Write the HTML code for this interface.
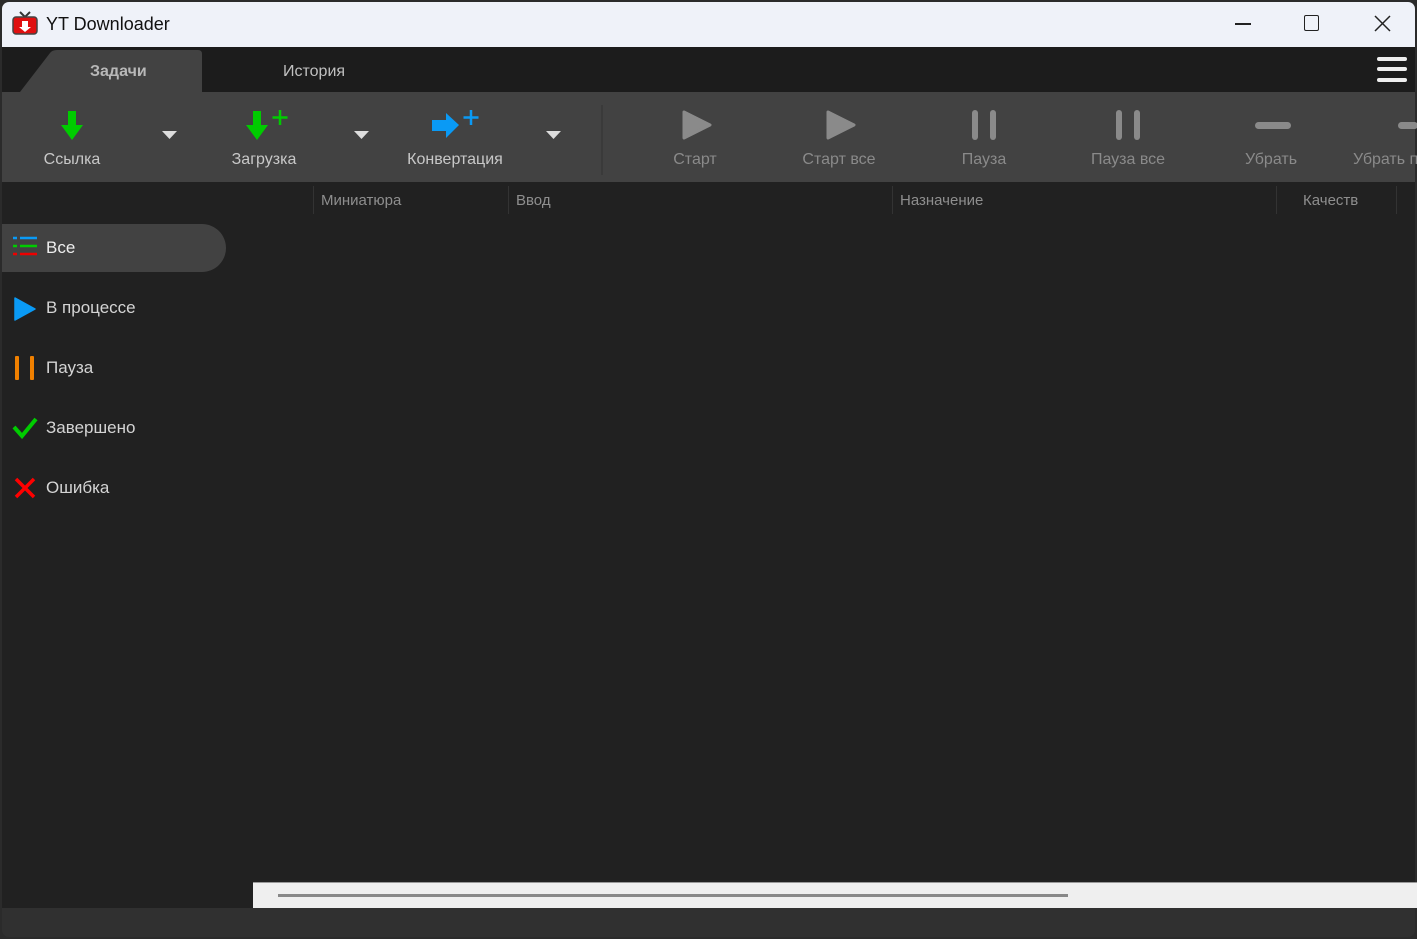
<!DOCTYPE html><html><head><meta charset="utf-8"><style>
*{margin:0;padding:0;box-sizing:border-box}
body{width:1417px;height:939px;background:#2b2b2b;font-family:"Liberation Sans","DejaVu Sans",sans-serif;position:relative;overflow:hidden}
.a{position:absolute}
.tb{left:2px;top:2px;width:1413px;height:45px;background:#eff2f9;border-radius:7px 7px 0 0}
.tl{font-size:18px;color:#111;left:46px;top:14px}
.lbl{font-size:16px;color:#c8c8c8;text-align:center;width:140px}
.dim{color:#8a8a8a}
.hdr{font-size:15px;color:#8e8e8e;top:192px}
.sep{width:1px;height:28px;background:#333;top:186px}
.side{font-size:17px;color:#d4d4d4;left:46px}
</style></head><body>
<div class="a tb"></div>
<svg class="a" style="left:12px;top:10px" width="26" height="26"><path d="M8 2 13 7 18 2" stroke="#333" stroke-width="2" fill="none"/><rect x="1" y="7" width="24" height="17" rx="3" fill="#e01010"/><rect x="1" y="7" width="24" height="17" rx="3" fill="none" stroke="#444" stroke-width="1.5"/><path d="M10 11h6v6h3l-6 5-6-5h3z" fill="#fff"/></svg>
<div class="a tl">YT Downloader</div>
<div class="a" style="left:1235px;top:23px;width:16px;height:1.5px;background:#222"></div>
<div class="a" style="left:1304px;top:15px;width:15px;height:16px;border:1.5px solid #222;border-radius:2px"></div>
<svg class="a" style="left:1374px;top:15px" width="17" height="17"><path d="M1 1 16 16M16 1 1 16" stroke="#222" stroke-width="1.5"/></svg>
<div class="a" style="left:2px;top:47px;width:1413px;height:45px;background:#1c1c1c"></div>
<svg class="a" style="left:2px;top:50px" width="202" height="42"><path d="M0 42 L18 42 L48 3 Q50 0 55 0 L196 0 Q200 0 200 4 L200 42 Z" fill="#424242"/></svg>
<div class="a" style="left:90px;top:63px;font-size:16px;font-weight:bold;color:#b8b8b8">Задачи</div>
<div class="a" style="left:283px;top:63px;font-size:16px;color:#c0c0c0">История</div>
<div class="a" style="left:1377px;top:57px;width:30px;height:4px;background:#eee;border-radius:2px"></div>
<div class="a" style="left:1377px;top:67px;width:30px;height:4px;background:#eee;border-radius:2px"></div>
<div class="a" style="left:1377px;top:78px;width:30px;height:4px;background:#eee;border-radius:2px"></div>
<div class="a" style="left:2px;top:92px;width:1413px;height:90px;background:#424242"></div>
<div class="a" style="left:601px;top:105px;width:2px;height:70px;background:#3a3a3a"></div>
<svg class="a" style="left:50px;top:110px" width="45" height="32"><path d="M18 1h8v14h7L22 30 11 15h7z" fill="#0c0"/></svg>
<svg class="a" style="left:242px;top:110px" width="50" height="32"><path d="M11 1h8v14h7L15 30 4 15h7z" fill="#0c0"/><path d="M38 0v15M30.5 7.5h15" stroke="#0c0" stroke-width="2.5"/></svg>
<svg class="a" style="left:430px;top:110px" width="55" height="32"><path d="M2 10h14V3l13 12-13 13v-7H2z" fill="#0a9af5"/><path d="M41 0v15M33.5 7.5h15" stroke="#0a9af5" stroke-width="2.5"/></svg>
<svg class="a" style="left:162px;top:131px" width="16" height="9"><path d="M0 0h15L7.5 8z" fill="#ddd"/></svg>
<svg class="a" style="left:354px;top:131px" width="16" height="9"><path d="M0 0h15L7.5 8z" fill="#ddd"/></svg>
<svg class="a" style="left:546px;top:131px" width="16" height="9"><path d="M0 0h15L7.5 8z" fill="#ddd"/></svg>
<div class="a lbl" style="left:2px;top:151px">Ссылка</div>
<div class="a lbl" style="left:194px;top:151px">Загрузка</div>
<div class="a lbl" style="left:385px;top:151px">Конвертация</div>
<svg class="a" style="left:682px;top:110px" width="30" height="30"><path d="M2 2 28 15 2 28z" fill="#8a8a8a" stroke="#8a8a8a" stroke-width="3" stroke-linejoin="round"/></svg>
<svg class="a" style="left:826px;top:110px" width="30" height="30"><path d="M2 2 28 15 2 28z" fill="#8a8a8a" stroke="#8a8a8a" stroke-width="3" stroke-linejoin="round"/></svg>
<div class="a" style="left:972px;top:110px;width:6px;height:30px;background:#8a8a8a;border-radius:3px"></div>
<div class="a" style="left:990px;top:110px;width:6px;height:30px;background:#8a8a8a;border-radius:3px"></div>
<div class="a" style="left:1116px;top:110px;width:6px;height:30px;background:#8a8a8a;border-radius:3px"></div>
<div class="a" style="left:1134px;top:110px;width:6px;height:30px;background:#8a8a8a;border-radius:3px"></div>
<div class="a" style="left:1255px;top:122px;width:36px;height:7px;background:#8a8a8a;border-radius:4px"></div>
<div class="a" style="left:1398px;top:122px;width:20px;height:7px;background:#8a8a8a;border-radius:4px"></div>
<div class="a lbl dim" style="left:625px;top:151px">Старт</div>
<div class="a lbl dim" style="left:769px;top:151px">Старт все</div>
<div class="a lbl dim" style="left:914px;top:151px">Пауза</div>
<div class="a lbl dim" style="left:1058px;top:151px">Пауза все</div>
<div class="a lbl dim" style="left:1201px;top:151px">Убрать</div>
<div class="a lbl dim" style="left:1353px;top:151px;width:80px;text-align:left">Убрать п</div>
<div class="a" style="left:2px;top:182px;width:1413px;height:726px;background:#212121"></div>
<div class="a sep" style="left:313px"></div><div class="a sep" style="left:508px"></div><div class="a sep" style="left:892px"></div><div class="a sep" style="left:1276px"></div><div class="a sep" style="left:1396px"></div>
<div class="a hdr" style="left:321px">Миниатюра</div>
<div class="a hdr" style="left:516px">Ввод</div>
<div class="a hdr" style="left:900px">Назначение</div>
<div class="a hdr" style="left:1303px">Качеств</div>
<div class="a" style="left:2px;top:224px;width:224px;height:48px;background:#424242;border-radius:0 24px 24px 0"></div>
<svg class="a" style="left:12px;top:236px" width="26" height="22"><path d="M1 2h4M8 2h17" stroke="#0a9af5" stroke-width="2.5"/><path d="M1 10h4M8 10h17" stroke="#0c0" stroke-width="2.5"/><path d="M1 18h4M8 18h17" stroke="#e00" stroke-width="2.5"/></svg>
<div class="a side" style="left:46px;top:238px;color:#eee">Все</div>
<svg class="a" style="left:13px;top:297px" width="24" height="24"><path d="M2 1 22 12 2 23z" fill="#0a9af5" stroke="#0a9af5" stroke-linejoin="round" stroke-width="1.5"/></svg>
<div class="a side" style="top:298px">В процессе</div>
<div class="a" style="left:15px;top:356px;width:4px;height:24px;background:#f08000;border-radius:1px"></div>
<div class="a" style="left:30px;top:356px;width:4px;height:24px;background:#f08000;border-radius:1px"></div>
<div class="a side" style="top:358px">Пауза</div>
<svg class="a" style="left:12px;top:417px" width="26" height="22"><path d="M2 10 10 19 24 2" stroke="#0c0" stroke-width="4" fill="none"/></svg>
<div class="a side" style="top:418px">Завершено</div>
<svg class="a" style="left:14px;top:477px" width="22" height="22"><path d="M2 2 20 20M20 2 2 20" stroke="#f00" stroke-width="3.5"/></svg>
<div class="a side" style="top:478px">Ошибка</div>
<div class="a" style="left:253px;top:882px;width:1164px;height:26px;background:#efefef;border-top:1px solid #999"></div>
<div class="a" style="left:278px;top:894px;width:790px;height:3px;background:#888"></div>
<div class="a" style="left:2px;top:908px;width:1413px;height:29px;background:#303030;border-radius:0 0 7px 7px"></div>
</body></html>
